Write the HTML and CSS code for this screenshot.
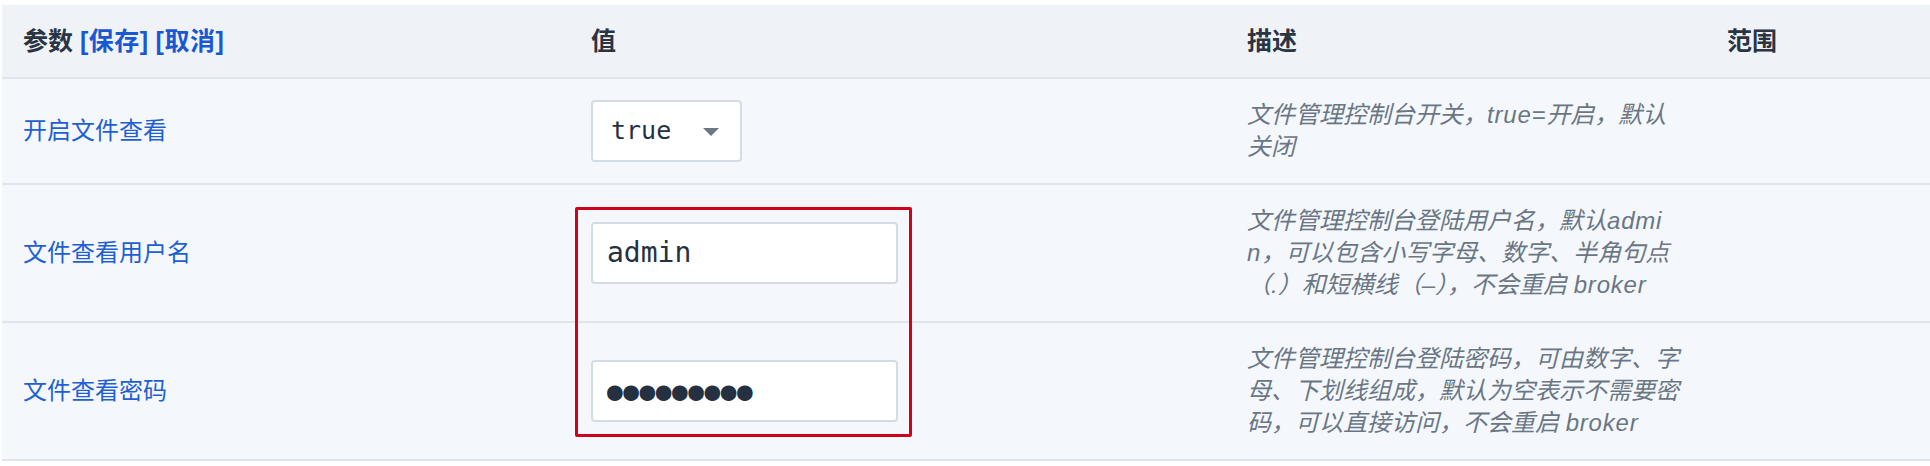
FILE: index.html
```html
<!DOCTYPE html>
<html lang="zh-CN">
<head>
<meta charset="utf-8">
<title>参数</title>
<link rel="stylesheet" href="styles.css">
</head>
<body>
<div class="table">
  <div class="row head">
    <div class="cell"><span>参数 <a class="action">[保存]</a> <a class="action">[取消]</a></span></div>
    <div class="cell">值</div>
    <div class="cell">描述</div>
    <div class="cell">范围</div>
  </div>
  <div class="row">
    <div class="cell label">开启文件查看</div>
    <div class="cell">
      <div class="select"><span class="mono">true</span><span class="caret"></span></div>
    </div>
    <div class="cell desc">文件管理控制台开关，<span class="latin">true=</span>开启，默认<br>关闭</div>
    <div class="cell"></div>
  </div>
  <div class="row">
    <div class="cell label">文件查看用户名</div>
    <div class="cell">
      <div class="field mono">admin</div>
    </div>
    <div class="cell desc">文件管理控制台登陆用户名，默认<span class="latin">admi</span><br><span class="latin">n</span>，可以包含小写字母、数字、半角句点<br>（.）和短横线（–），不会重启 <span class="latin">broker</span></div>
    <div class="cell"></div>
  </div>
  <div class="row">
    <div class="cell label">文件查看密码</div>
    <div class="cell">
      <div class="field mono dots">●●●●●●●●●</div>
    </div>
    <div class="cell desc">文件管理控制台登陆密码，可由数字、字<br>母、下划线组成，默认为空表示不需要密<br>码，可以直接访问，不会重启 <span class="latin">broker</span></div>
    <div class="cell"></div>
  </div>
  <div class="highlight"></div>
</div>
</body>
</html>
```

FILE: styles.css
```css
html, body {
  margin: 0;
  padding: 0;
  background: #ffffff;
}

body {
  padding: 5px 0 0 2px;
  font-family: "Liberation Sans", "Noto Sans CJK SC", sans-serif;
  font-size: 24px;
  color: #2a3442;
}

.table {
  position: relative;
  display: flex;
  flex-direction: column;
}

.row {
  display: grid;
  grid-template-columns: 568px 656px 480px 1fr;
  background: #f4f8fc;
  border-bottom: 2px solid #dee5ed;
}

.row.head {
  background: #eff3f8;
  font-weight: 700;
  font-size: 25px;
}

.cell {
  display: flex;
  align-items: center;
  padding: 20px 21px;
  line-height: 32px;
  min-width: 0;
}

.head .cell {
  padding: 22px 21px;
  line-height: 28px;
}

.action {
  color: #1a58d2;
  text-decoration: none;
  letter-spacing: 0.5px;
}

.label {
  color: #1f5fd3;
}

.desc {
  display: block;
  color: #6b7684;
  font-style: italic;
  white-space: nowrap;
}

.latin {
  letter-spacing: 0.8px;
}

.mono {
  font-family: "DejaVu Sans Mono", monospace;
  color: #253141;
}

.select {
  box-sizing: border-box;
  width: 151px;
  height: 62px;
  display: flex;
  align-items: center;
  justify-content: space-between;
  padding: 0 21px 0 18px;
  background: #ffffff;
  border: 2px solid #d3dbe5;
  border-radius: 4px;
  font-size: 25px;
  line-height: 30px;
}

.caret {
  width: 0;
  height: 0;
  border-left: 8px solid transparent;
  border-right: 8px solid transparent;
  border-top: 8px solid #6b7785;
  margin-top: 2px;
}

.field {
  box-sizing: border-box;
  width: 307px;
  height: 62px;
  display: flex;
  align-items: center;
  padding: 0 14px;
  background: #ffffff;
  border: 2px solid #d3dbe5;
  border-radius: 4px;
  font-size: 28px;
  line-height: 34px;
}

.dots {
  font-size: 26px;
  letter-spacing: 0.6px;
}

.highlight {
  position: absolute;
  left: 573px;
  top: 202px;
  width: 337px;
  height: 230px;
  box-sizing: border-box;
  border: 3px solid #d0011b;
  border-radius: 2px;
  pointer-events: none;
}
```
